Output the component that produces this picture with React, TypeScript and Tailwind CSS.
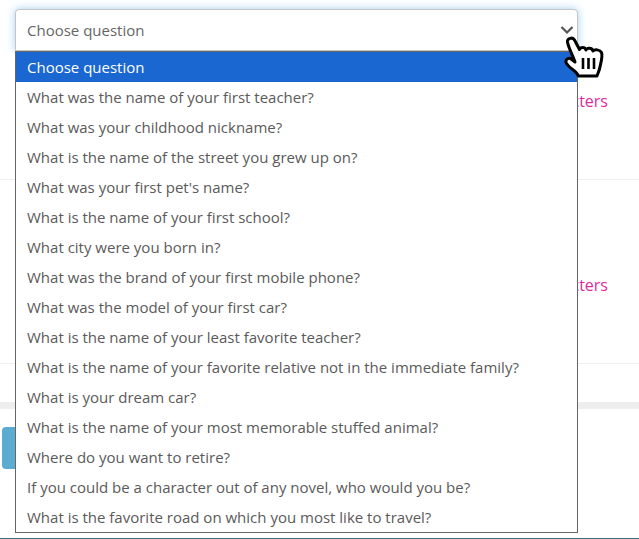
import React from 'react';

const questions = [
  'What was the name of your first teacher?',
  'What was your childhood nickname?',
  'What is the name of the street you grew up on?',
  "What was your first pet's name?",
  'What is the name of your first school?',
  'What city were you born in?',
  'What was the brand of your first mobile phone?',
  'What was the model of your first car?',
  'What is the name of your least favorite teacher?',
  'What is the name of your favorite relative not in the immediate family?',
  'What is your dream car?',
  'What is the name of your most memorable stuffed animal?',
  'Where do you want to retire?',
  'If you could be a character out of any novel, who would you be?',
  'What is the favorite road on which you most like to travel?',
];

const HandCursor = () => (
  <svg width="50" height="52" viewBox="0 0 50 52" className="absolute left-[560px] top-[30px]">
    <path
      d="M7.500 12c-.5-3.500 5-5.500 7-2l5 9.500c1-2.500 5.500-3 6.500.5 1-2.500 6-2.500 7 1 1.500-2 7-1.500 8.500 1.500 1 2.500 0 8-1 12-.5 4-2 8-3.500 11.500H18.500c-1-2-2-3.500-4-5-3-2-6-4.500-8-7.500-2-3.500 1.500-6 4-5l4.500 3.500C13 26 8.500 18 7.500 12z"
      fill="#ffffff"
      stroke="#000000"
      strokeWidth="3"
      strokeLinejoin="round"
    />
    <path d="M23 28v11M28.500 28v11M34 28v11" fill="none" stroke="#000000" strokeWidth="2.600" />
  </svg>
);

export default function App() {
  return (
    <div className="relative h-[539px] w-[639px] overflow-hidden bg-white font-['Open_Sans',sans-serif] text-[15px] text-[#5a5a5a]">
      {/* page behind the open dropdown */}
      <div className="flex h-full flex-col">
        <div className="flex h-[180px] flex-col border-b border-[#eeeeee] pt-[88px] pr-[31px] text-right text-[16px] leading-[26px] text-[#dc2ba0]">
          Minimum 8 characters
        </div>
        <div className="flex h-[184px] flex-col border-b border-[#eeeeee] pt-[92px] pr-[31px] text-right text-[16px] leading-[26px] text-[#dc2ba0]">
          Minimum 8 characters
        </div>
        <div className="mt-[38px] h-[7px] bg-[#eeeeee]" />
        <div className="mt-[18px] ml-[2px] h-[42px] w-[120px] rounded-[4px] bg-[#5bacd0]" />
        <div className="mt-auto h-px bg-[#3a6a85]" />
      </div>

      {/* open select */}
      <div className="absolute left-[15px] top-[9px] w-[563px]">
        <div className="flex h-[42px] items-center justify-between rounded-t-[4px] border border-[#c4c4c4] bg-white pl-[11px] pr-[3px] shadow-[0_0_8px_rgba(102,175,233,0.6)]">
          <span className="text-[#666666]">Choose question</span>
          <svg width="14" height="10" viewBox="0 0 14 10">
            <path d="M1.500 2l5.500 5.500L12.500 2" fill="none" stroke="#555555" strokeWidth="2.200" />
          </svg>
        </div>
        <ul className="border border-[#666666] bg-white">
          <li className="flex h-[30px] items-center bg-[#1a67d2] px-[11px] text-white">Choose question</li>
          {questions.map((q) => (
            <li key={q} className="flex h-[30px] items-center px-[11px]">
              {q}
            </li>
          ))}
        </ul>
      </div>

      <HandCursor />
    </div>
  );
}
